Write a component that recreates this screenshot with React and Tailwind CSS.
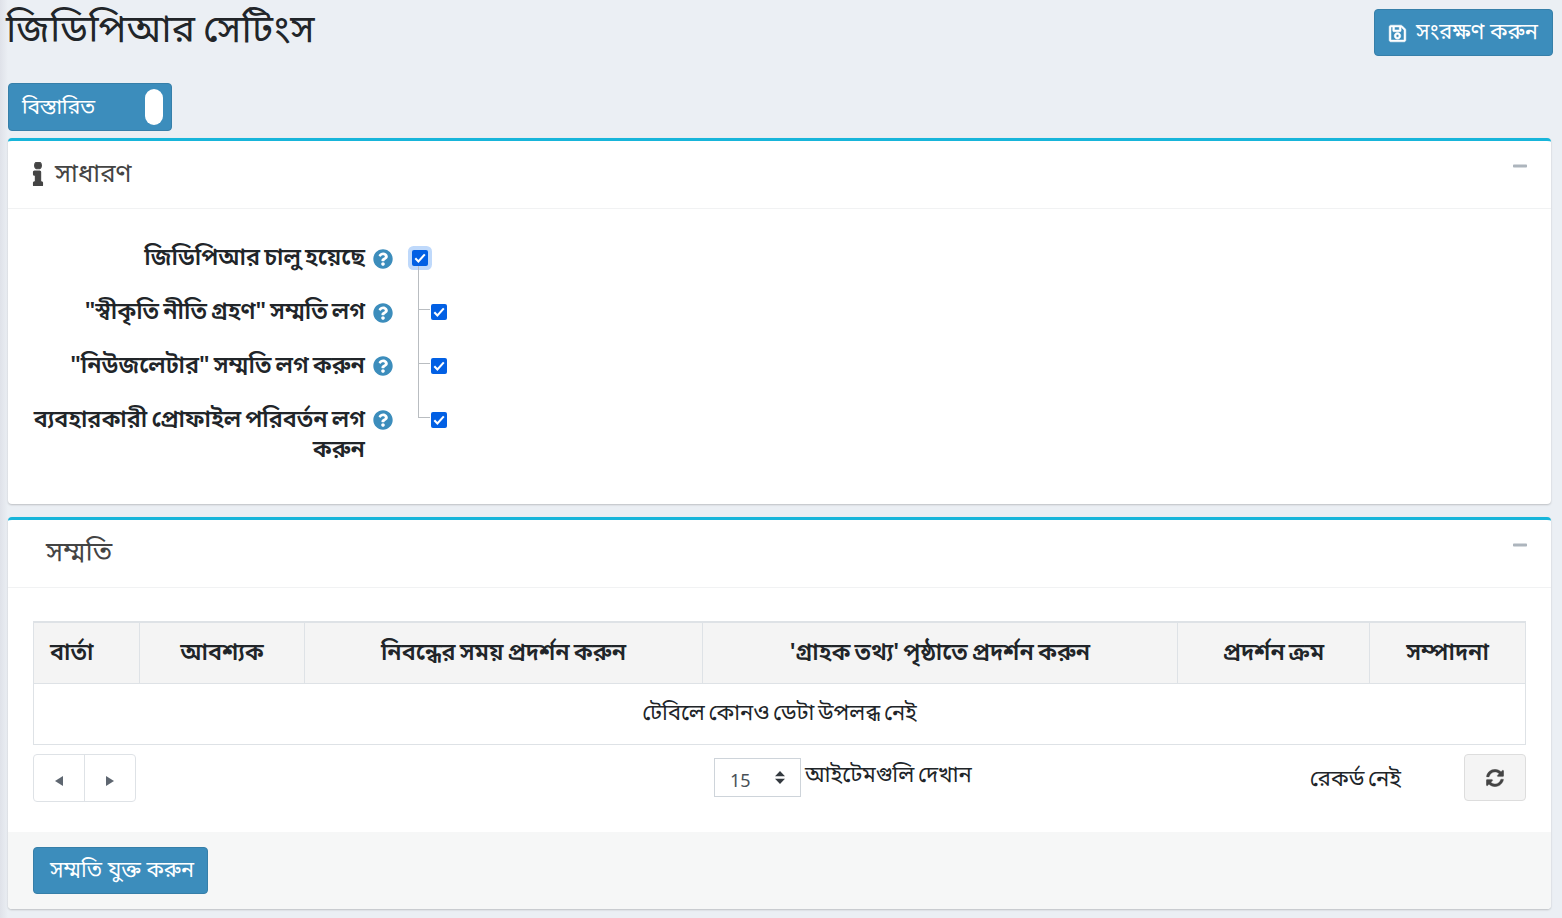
import { FaInfo, FaRegSave, FaQuestionCircle, FaMinus, FaSyncAlt } from "react-icons/fa";

const settings = [
  { label: "জিডিপিআর চালু হয়েছে", row: "h-[54px]", icon: "mt-2" },
  { label: "\"স্বীকৃতি নীতি গ্রহণ\" সম্মতি লগ", row: "h-[54px]", icon: "mt-2" },
  { label: "\"নিউজলেটার\" সম্মতি লগ করুন", row: "h-[54px]", icon: "mt-[7px]" },
  { label: "ব্যবহারকারী প্রোফাইল পরিবর্তন লগ করুন", row: "h-[61px]", icon: "mt-[7px]" },
];

const columns = [
  { label: "বার্তা", width: "w-[106px]", align: "pl-4 text-left" },
  { label: "আবশ্যক", width: "w-[165px]", align: "text-center" },
  { label: "নিবন্ধের সময় প্রদর্শন করুন", width: "w-[398px]", align: "text-center" },
  { label: "'গ্রাহক তথ্য' পৃষ্ঠাতে প্রদর্শন করুন", width: "w-[475px]", align: "text-center" },
  { label: "প্রদর্শন ক্রম", width: "w-[192px]", align: "text-center" },
  { label: "সম্পাদনা", width: "w-[156px]", align: "text-center" },
];

function Checkbox({ focused }) {
  return (
    <span
      role="checkbox"
      aria-checked="true"
      className={
        "flex h-4 w-4 items-center justify-center rounded-[2px] bg-[#0260e4] text-white " +
        (focused ? "shadow-[0_0_0_4px_#bfd9fb]" : "")
      }
    >
      <svg viewBox="0 0 16 16" className="h-4 w-4" fill="none" stroke="currentColor" strokeWidth="2.1">
        <path d="M3.3 8.3 6.4 11.4 12.8 4.4" />
      </svg>
    </span>
  );
}

function CardHeader({ title, icon, className }) {
  return (
    <div className="flex h-[68px] items-start justify-between border-b border-[#f1f2f3] pr-6">
      <h2 className={"flex leading-[30px] font-normal whitespace-nowrap text-[#444] " + className}>
        {icon}
        {title}
      </h2>
      <FaMinus className="mt-[17px] h-4 w-[14px] text-[#adb5bd]" />
    </div>
  );
}

export default function App() {
  return (
    <div className="h-[918px] overflow-hidden bg-[#ebeff4] bg-[linear-gradient(to_right,#dfe2e9_0,#ebeff4_8px)] pr-[11px] pl-2 font-['Noto_Sans','Noto_Sans_Bengali',sans-serif] text-[22px] leading-[30px] [word-spacing:-2px] text-[#212529]">
      <header className="-mr-[2px] flex h-[83px] items-start justify-between">
        <h1 className="-ml-[2px] text-[39px] leading-[53px] font-normal whitespace-nowrap">জিডিপিআর সেটিংস</h1>
        <button className="mt-[9px] flex h-[47px] w-[179px] items-center rounded-[4px] border border-[#367fa9] bg-[#3c8dbc] pb-[3px] pl-[13px] text-white">
          <FaRegSave className="mt-1 mr-[9px] h-[19px] w-[19px]" stroke="currentColor" strokeWidth="14" />
          <span className="text-[21.8px] whitespace-nowrap">সংরক্ষণ করুন</span>
        </button>
      </header>

      <button className="flex h-12 w-[164px] items-center justify-between rounded-[4px] border border-[#367fa9] bg-[#3c8dbc] pr-2 pl-[13px] text-white">
        <span className="pb-[2px] text-[21px] whitespace-nowrap">বিস্তারিত</span>
        <span className="h-9 w-[18px] rounded-full bg-white" />
      </button>

      <section className="mt-[7px] h-[366px] rounded-[4px] border-t-[3px] border-[#17b5da] bg-white shadow-[0_1px_2px_rgba(0,0,0,0.2)]">
        <CardHeader
          title="সাধারণ"
          className="pt-4 pl-6 text-[25.8px]"
          icon={<FaInfo className="mt-[5px] mr-[11px] h-6 w-[12px] text-[#444]" stroke="currentColor" strokeWidth="24" />}
        />
        <div className="relative flex flex-col pt-8">
          {settings.map((s, i) => (
            <div key={i} className={"flex items-start " + s.row}>
              <label className="w-[357px] pl-5 text-right text-[23.4px] font-semibold">{s.label}</label>
              <FaQuestionCircle className={"ml-2 h-5 w-5 shrink-0 text-[#3c8dbc] " + s.icon} />
              <div className={"mt-[9px] " + (i === 0 ? "ml-[19px]" : "ml-[38px]")}>
                <Checkbox focused={i === 0} />
              </div>
            </div>
          ))}
          <svg className="absolute top-[57px] left-[410px]" width="12" height="153" fill="none" stroke="#b9bdc1">
            <path d="M.5 0V151.5M0 43.5H12M0 97.5H12M0 151.5H12" />
          </svg>
        </div>
      </section>

      <section className="mt-[13px] h-[392px] overflow-hidden rounded-[4px] border-t-[3px] border-[#17b5da] bg-white shadow-[0_1px_2px_rgba(0,0,0,0.2)]">
        <CardHeader title="সম্মতি" className="pt-4 pl-[38px] text-[27.5px]" />
        <div className="h-[244px] pt-[33px] pr-[25px] pl-[25px]">
          <table className="w-[1492px] table-fixed border-collapse border border-[#dee2e6]">
            <thead>
              <tr className="h-[61px] border-t-2 border-[#dee2e6] bg-[#f4f4f4]">
                {columns.map((c, i) => (
                  <th key={i} className={"border border-t-2 border-[#dee2e6] p-0 pb-[3px] text-[23.4px] font-semibold whitespace-nowrap " + c.width + " " + c.align}>
                    {c.label}
                  </th>
                ))}
              </tr>
            </thead>
            <tbody>
              <tr className="h-[61px]">
                <td colSpan={6} className="p-0 pb-1 text-center text-[21.9px]">টেবিলে কোনও ডেটা উপলব্ধ নেই</td>
              </tr>
            </tbody>
          </table>
          <div className="flex h-12 items-start pt-[9px]">
            <div className="flex h-12 w-[103px] rounded-[4px] border border-[#dee2e6] text-[#666]">
              <button className="flex flex-1 items-center justify-center border-r border-[#dee2e6] pt-[6px]">
                <svg width="8" height="10" fill="#5e6670"><path d="M8 0V10L0 5Z" /></svg>
              </button>
              <button className="flex flex-1 items-center justify-center pt-[6px]">
                <svg width="8" height="10" fill="#5e6670"><path d="M0 0V10L8 5Z" /></svg>
              </button>
            </div>
            <div className="mt-1 ml-[578px] flex h-[39px] w-[87px] items-center justify-between border border-[#ced4da] pr-[15px] pl-[15px] text-[#495057]">
              <span className="pt-[5px] text-[18px]">15</span>
              <svg width="10" height="13" fill="#343a40"><path d="M0 5.3H10L5 0ZM0 7.7H10L5 13Z" /></svg>
            </div>
            <span className="mt-1 ml-1 whitespace-nowrap">আইটেমগুলি দেখান</span>
            <div className="ml-auto flex">
              <span className="mt-2 mr-[63px] whitespace-nowrap">রেকর্ড নেই</span>
              <button className="flex h-[47px] w-[62px] items-center justify-center rounded-[4px] border border-[#ddd] bg-[#f4f4f4]">
                <FaSyncAlt className="mt-[2px] h-[18px] w-[18px] text-[#444]" stroke="currentColor" strokeWidth="8" />
              </button>
            </div>
          </div>
        </div>
        <footer className="h-[77px] bg-[#f6f7f7] pt-[15px] pl-[25px]">
          <button className="flex h-[47px] w-[175px] items-center rounded-[4px] border border-[#367fa9] bg-[#3c8dbc] pb-[3px] pl-4 text-white">
            <span className="text-[21.6px] whitespace-nowrap">সম্মতি যুক্ত করুন</span>
          </button>
        </footer>
      </section>
    </div>
  );
}
